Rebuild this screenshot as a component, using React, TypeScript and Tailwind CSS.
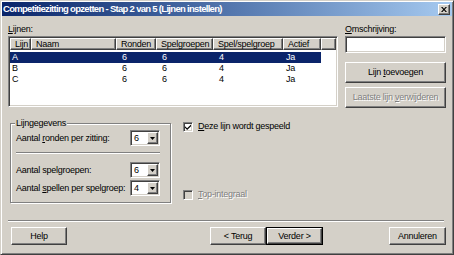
import React from 'react';

// classic 3D bevels
const raised =
  'bg-[#d4d0c8] border border-t-white border-l-white border-r-[#404040] border-b-[#404040] shadow-[inset_-1px_-1px_#808080]';
const sunken =
  'border border-t-[#808080] border-l-[#808080] border-r-white border-b-white shadow-[inset_1px_1px_#404040,inset_-1px_-1px_#d4d0c8]';
const disabledText = 'text-[#808080] [text-shadow:1px_1px_0_#fff]';

const columns = [
  { label: 'Lijn', width: 'w-[21px]', cell: 'pl-[2px]' },
  { label: 'Naam', width: 'w-[85px]', cell: 'pl-[6px]' },
  { label: 'Ronden', width: 'w-[40px]', cell: 'pl-[6px]' },
  { label: 'Spelgroepen', width: 'w-[57px]', cell: 'pl-[6px]' },
  { label: 'Spel/spelgroep', width: 'w-[70px]', cell: 'pl-[6px]' },
  { label: 'Actief', width: 'w-[38px]', cell: 'pl-[3px]' },
];

const rows = [
  ['A', '', '6', '6', '4', 'Ja'],
  ['B', '', '6', '6', '4', 'Ja'],
  ['C', '', '6', '6', '4', 'Ja'],
];

const ListView: React.FC = () => (
  <div className={`h-[71px] bg-white p-[1px] ${sunken}`}>
    <div className="flex h-[12px]">
      {columns.map((c) => (
        <div key={c.label} className={`${c.width} ${raised} overflow-hidden pl-[4px] leading-[10px] whitespace-nowrap`}>
          {c.label}
        </div>
      ))}
      <div className={`flex-1 ${raised}`} />
    </div>
    <div className="mt-[2px]">
      {rows.map((r, i) => (
        <div
          key={r[0]}
          className={`flex h-[11px] w-[311px] leading-[11px] ${i === 0 ? 'bg-[#0a246a] text-white' : ''}`}
        >
          {r.map((v, j) => (
            <div key={j} className={`${columns[j].width} ${columns[j].cell}`}>
              {v}
            </div>
          ))}
        </div>
      ))}
    </div>
  </div>
);

const Combo: React.FC<{ value: string }> = ({ value }) => (
  <div className={`flex h-[16px] w-[30px] shrink-0 bg-white p-[1px] ${sunken}`}>
    <span className="flex-1 pl-[2px] leading-[12px]">{value}</span>
    <div className={`flex w-[11px] items-center justify-center ${raised}`}>
      <svg width="5" height="3" viewBox="0 0 5 3">
        <path d="M0 0h5L2.5 3z" fill="#000" />
      </svg>
    </div>
  </div>
);

const CheckBox: React.FC<{ checked?: boolean; disabled?: boolean }> = ({ checked, disabled }) => (
  <span
    className={`flex h-[10px] w-[10px] shrink-0 items-center justify-center ${sunken} ${
      disabled ? 'bg-[#d4d0c8]' : 'bg-white'
    }`}
  >
    {checked && (
      <svg width="6" height="6" viewBox="0 0 7 7">
        <path d="M0 2.5L2.5 5 7 0.5V2.5L2.5 7 0 4.5z" fill="#000" />
      </svg>
    )}
  </span>
);

const Separator: React.FC<{ className?: string }> = ({ className = '' }) => (
  <div className={`h-0 border-t border-b border-t-[#808080] border-b-white ${className}`} />
);

const App: React.FC = () => {
  return (
    <div className="flex h-[255px] w-[454px] flex-col border border-t-[#d4d0c8] border-l-[#d4d0c8] border-r-[#404040] border-b-[#404040] bg-[#d4d0c8] p-[1px] font-['Liberation_Sans',Arial,sans-serif] text-[9px] leading-[11px] tracking-[-0.25px] text-black shadow-[inset_1px_1px_#fff,inset_-1px_-1px_#808080]">
      {/* Title bar */}
      <div className="flex h-[14px] shrink-0 items-center bg-linear-to-r from-[#0a246a] to-[#a6caf0] pl-[1px] pr-[2px]">
        <span className="flex-1 whitespace-nowrap text-[9.5px] font-bold leading-[14px] tracking-[-0.7px] text-white">
          Competitiezitting opzetten - Stap 2 van 5 (Lijnen instellen)
        </span>
        <button className={`flex h-[11px] w-[12px] items-center justify-center ${raised}`}>
          <svg width="6" height="5" viewBox="0 0 6 5">
            <path d="M0 0h1.5L3 1.8 4.5 0H6L3.8 2.5 6 5H4.5L3 3.2 1.5 5H0l2.2-2.5z" fill="#000" />
          </svg>
        </button>
      </div>

      {/* Body */}
      <div className="flex flex-1 flex-col pl-[6px] pt-[8px]">
        {/* Lines list + description */}
        <div className="flex">
          <div className="w-[330px]">
            <div className="mb-[1px]">
              <u>L</u>ijnen:
            </div>
            <ListView />
          </div>
          <div className="ml-[7px] flex w-[101px] flex-col">
            <div>
              <u>O</u>mschrijving:
            </div>
            <div className={`mt-[1px] h-[17px] bg-white ${sunken}`} />
            <button className={`mt-[9px] h-[21px] ${raised}`}>
              Lijn <u>t</u>oevoegen
            </button>
            <button disabled className={`mt-[4px] h-[21px] ${raised} ${disabledText}`}>
              Laatste lijn <u>v</u>erwijderen
            </button>
          </div>
        </div>

        {/* Line settings */}
        <div className="mt-[10px] flex">
          <fieldset className="ml-[2px] w-[161px] border border-[#808080] pb-[6px] pl-[5px] pr-[10px] pt-[1px] shadow-[inset_1px_1px_#fff,1px_1px_#fff]">
            <legend className="-ml-[1px] bg-[#d4d0c8] px-[1px]">Lijngegevens</legend>
            <div className="flex h-[16px] items-center justify-between">
              <span className="whitespace-nowrap">
                Aantal <u>r</u>onden per zitting:
              </span>
              <Combo value="6" />
            </div>
            <Separator className="mt-[6px]" />
            <div className="mt-[8px] flex h-[16px] items-center justify-between">
              <span className="whitespace-nowrap">Aantal spelgroepen:</span>
              <Combo value="6" />
            </div>
            <div className="mt-[2px] flex h-[16px] items-center justify-between">
              <span className="whitespace-nowrap">
                Aantal <u>s</u>pellen per spelgroep:
              </span>
              <Combo value="4" />
            </div>
          </fieldset>

          <div className="ml-[12px] flex flex-col justify-between py-[3px]">
            <label className="flex items-center gap-[5px]">
              <CheckBox checked />
              <span>
                <u>D</u>eze lijn wordt gespeeld
              </span>
            </label>
            <label className="flex items-center gap-[5px]">
              <CheckBox disabled />
              <span className={disabledText}>
                <u>T</u>op-integraal
              </span>
            </label>
          </div>
        </div>

        <Separator className="mt-[17px] w-[436px]" />

        {/* Wizard buttons */}
        <div className="mt-[5px] flex">
          <button className={`ml-[3px] h-[18px] w-[56px] ${raised}`}>Help</button>
          <button className={`ml-[143px] h-[18px] w-[56px] ${raised}`}>&lt; Terug</button>
          <button className="h-[18px] w-[57px] border border-black">
            <span className={`flex h-full w-full items-center justify-center ${raised}`}>Verder &gt;</span>
          </button>
          <button className={`ml-[66px] h-[18px] w-[57px] ${raised}`}>Annuleren</button>
        </div>
      </div>
    </div>
  );
};

export default App;
